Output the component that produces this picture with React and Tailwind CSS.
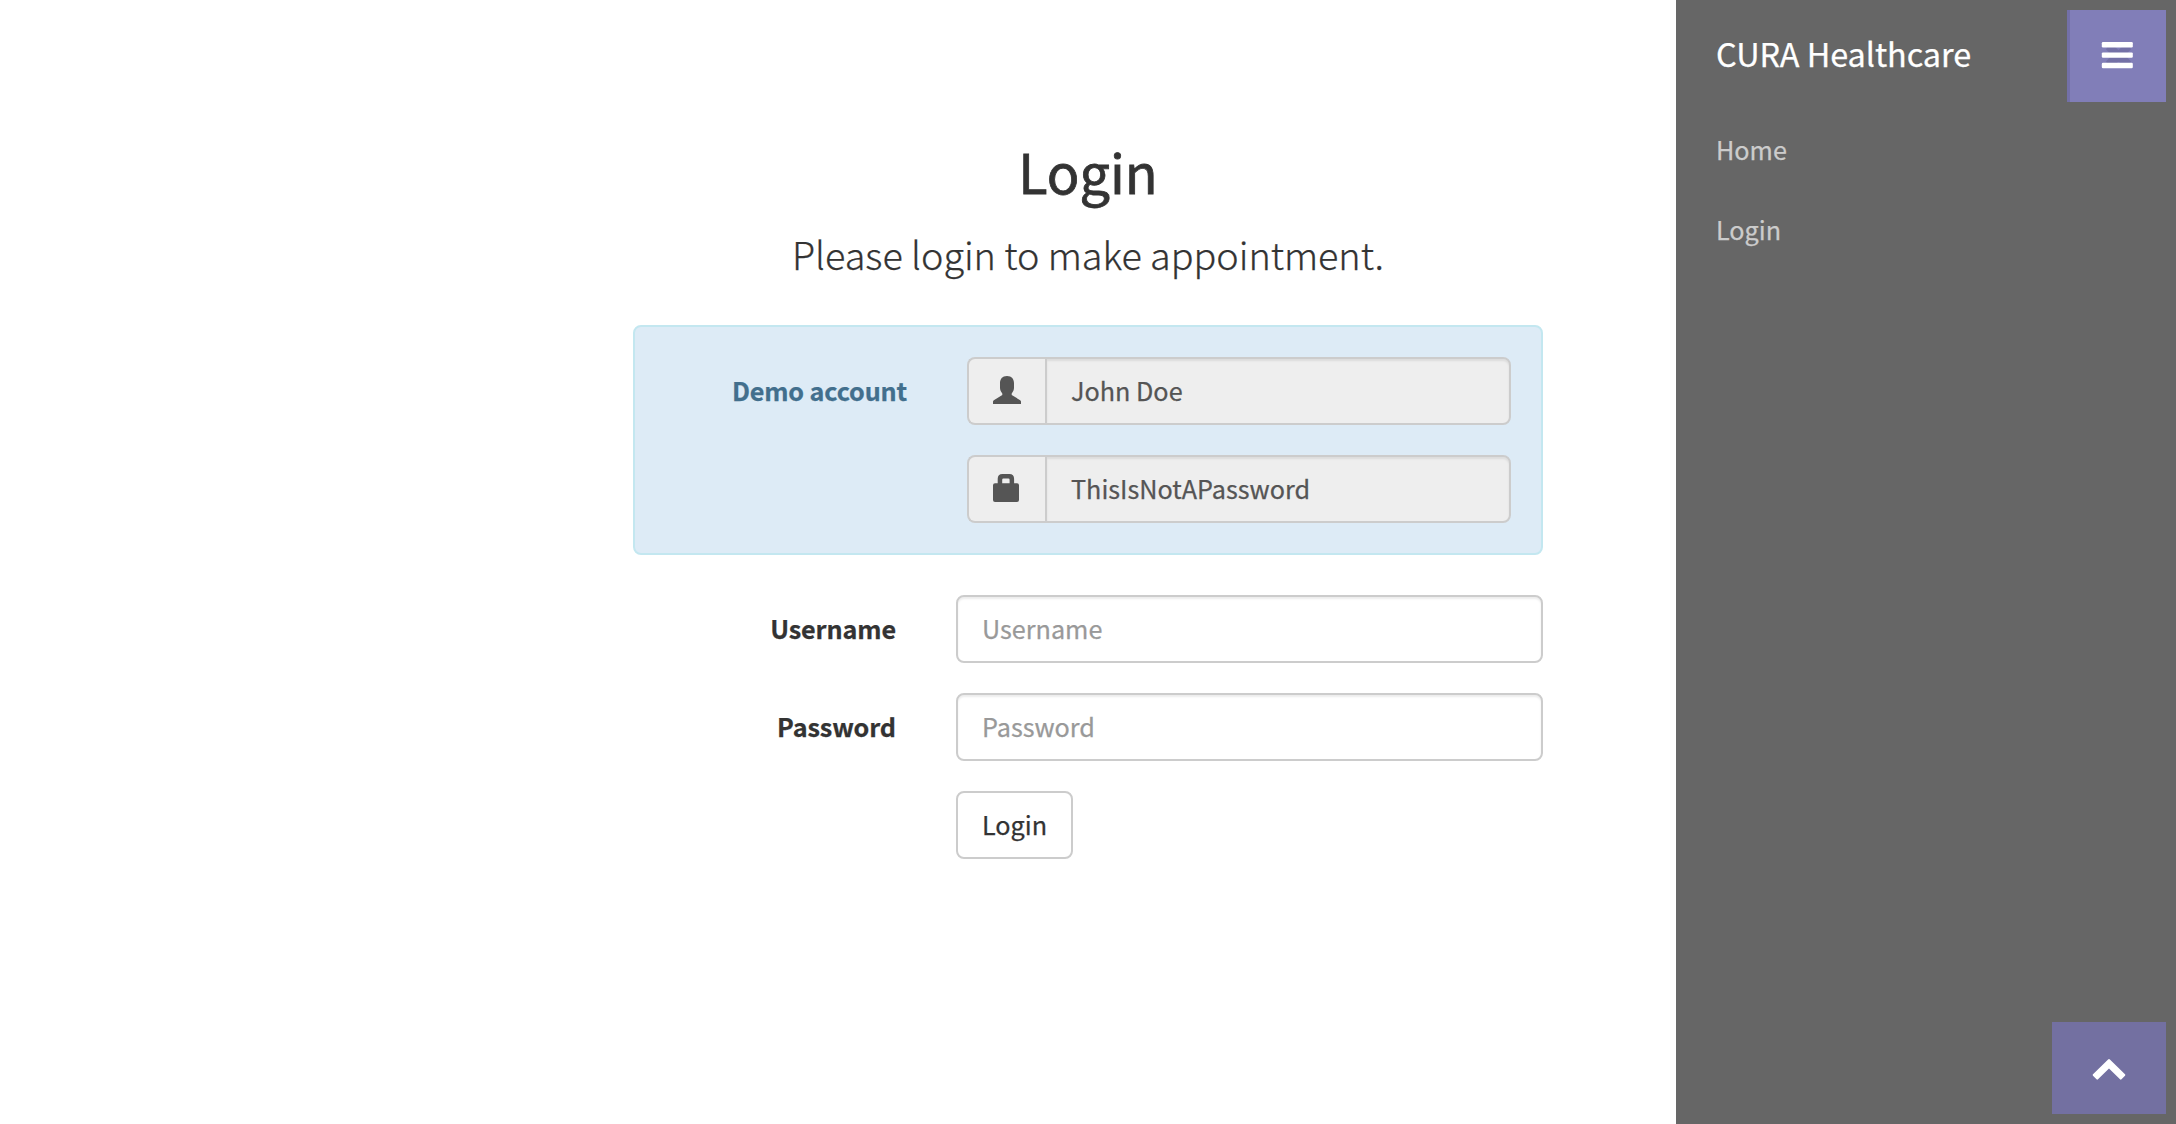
import React from "react";

function UserIcon() {
  return (
    <svg viewBox="0 0 28 28" className="h-7 w-7 fill-[#555]">
      <path d="M14 0C18.8 0 21 3.2 21 7.2V11.8C21 14 20.2 15.6 18.7 17.4V19L27.2 24.2Q28 24.8 28 25.6V28H0V25.6Q0 24.8 0.8 24.2L9.3 19V17.4C7.8 15.6 7 14 7 11.8V7.2C7 3.2 9.2 0 14 0Z" />
    </svg>
  );
}

function LockIcon() {
  return (
    <svg viewBox="0 0 28 28" className="h-7 w-7 fill-[#555]">
      <path
        fillRule="evenodd"
        d="M4.7 9.3V4.7Q4.7 0 9.4 0H16.4Q21.1 0 21.1 4.7V9.3H24Q26 9.3 26 11.3V26Q26 28 24 28H2Q0 28 0 26V11.3Q0 9.3 2 9.3ZM9.2 9.3H16.6V5.8Q16.6 4.6 15.4 4.6H10.4Q9.2 4.6 9.2 5.8Z"
      />
    </svg>
  );
}

function MenuIcon() {
  return (
    <svg viewBox="0 0 32 28" className="h-7 w-8">
      <path
        d="M7 3.5L10 1.5L17.5 8L25 1.5L28 3.5L30 7.5L24 13L30 19.4L28 23.6L25 25L17.5 19.8L10 25L7.4 23.6L5 19.4L11 13L5 7.5Z"
        className="fill-[#7370a6]"
      />
      <rect x="0.8" y="0" width="31" height="5.4" rx="1.2" fill="#fff" />
      <rect x="0.8" y="10.4" width="31" height="5.4" rx="1.2" fill="#fff" />
      <rect x="0.8" y="20.8" width="31" height="5.4" rx="1.2" fill="#fff" />
    </svg>
  );
}

function ChevronUpIcon() {
  return (
    <svg viewBox="0 0 34 22" className="h-[22px] w-[34px] fill-white">
      <path d="M16.1 0.4Q17 -0.4 17.9 0.4L33 15.3Q33.6 16 33 16.7L29.5 20.3Q28.7 21 28 20.3L17 9.5L6 20.3Q5.3 21 4.5 20.3L1 16.7Q0.4 16 1 15.3Z" />
    </svg>
  );
}

const field =
  "h-[68px] w-full border-2 border-[#ccc] px-6 pb-[2px] outline-none shadow-[inset_0_2px_2px_rgba(0,0,0,0.075)]";

function DemoField({ icon, value }) {
  return (
    <div className="flex">
      <span className="flex h-[68px] w-[78px] shrink-0 items-center rounded-l-lg border-2 border-r-0 border-[#ccc] bg-[#eee] pb-[2px] pl-6">
        {icon}
      </span>
      <input readOnly value={value} className={`${field} rounded-r-lg bg-[#eee] text-[#555]`} />
    </div>
  );
}

function FormRow({ label, type }) {
  return (
    <div className="flex items-center">
      <label className="w-[263px] shrink-0 text-right font-bold tracking-[-0.1px]">{label}</label>
      <input
        type={type}
        placeholder={label}
        className={`${field} ml-[60px] rounded-lg bg-white placeholder:text-[#999] placeholder:opacity-100`}
      />
    </div>
  );
}

export default function App() {
  return (
    <div className="flex h-[1124px] w-[2176px] overflow-hidden bg-white font-['Noto_Sans_CJK_SC',sans-serif] text-[25.2px] text-[#333] [-webkit-text-stroke:0.25px_currentColor]">
      <main className="w-[1676px] pt-[138px] pl-[633px]">
        <div className="w-[910px]">
          <h1 className="text-center text-[54px] leading-[66px] [-webkit-text-stroke:0.8px_currentColor]">Login</h1>
          <p className="mt-[27px] text-center text-[37.8px] leading-[46px] font-light tracking-[-0.05px]">
            Please login to make appointment.
          </p>
          <section className="mt-12 flex h-[230px] rounded-lg border-2 border-[#c3e7f0] bg-[#ddebf6] p-[30px]">
            <span className="h-[68px] w-[242px] shrink-0 text-right leading-[67px] font-bold tracking-[-0.15px] text-[#426f8d]">
              Demo account
            </span>
            <div className="ml-[60px] flex grow flex-col gap-[30px]">
              <DemoField icon={<UserIcon />} value="John Doe" />
              <DemoField icon={<LockIcon />} value="ThisIsNotAPassword" />
            </div>
          </section>
          <form className="mt-10 flex flex-col gap-[30px]">
            <FormRow label="Username" type="text" />
            <FormRow label="Password" type="password" />
            <button
              type="button"
              className="ml-[323px] h-[68px] w-[117px] rounded-lg border-2 border-[#ccc] bg-white pb-px text-center"
            >
              Login
            </button>
          </form>
        </div>
      </main>
      <nav className="flex w-[500px] flex-col bg-[#666] pr-[10px] pb-[10px] pl-10">
        <div className="flex pt-[10px]">
          <a className="grow pb-[6px] text-[32.4px] leading-[86px] tracking-[-0.05px] text-white">CURA Healthcare</a>
          <button className="flex h-[92px] w-[99px] items-center justify-center border-l-[3px] border-[#7370a8] bg-[#817eb8] pr-[3px]">
            <MenuIcon />
          </button>
        </div>
        <a className="mt-[7px] leading-[80px] text-[#ccc]">Home</a>
        <a className="leading-[80px] text-[#ccc]">Login</a>
        <button className="mt-auto flex h-[92px] w-[114px] items-center justify-center self-end bg-[#7370a1] pt-[3px]">
          <ChevronUpIcon />
        </button>
      </nav>
    </div>
  );
}
